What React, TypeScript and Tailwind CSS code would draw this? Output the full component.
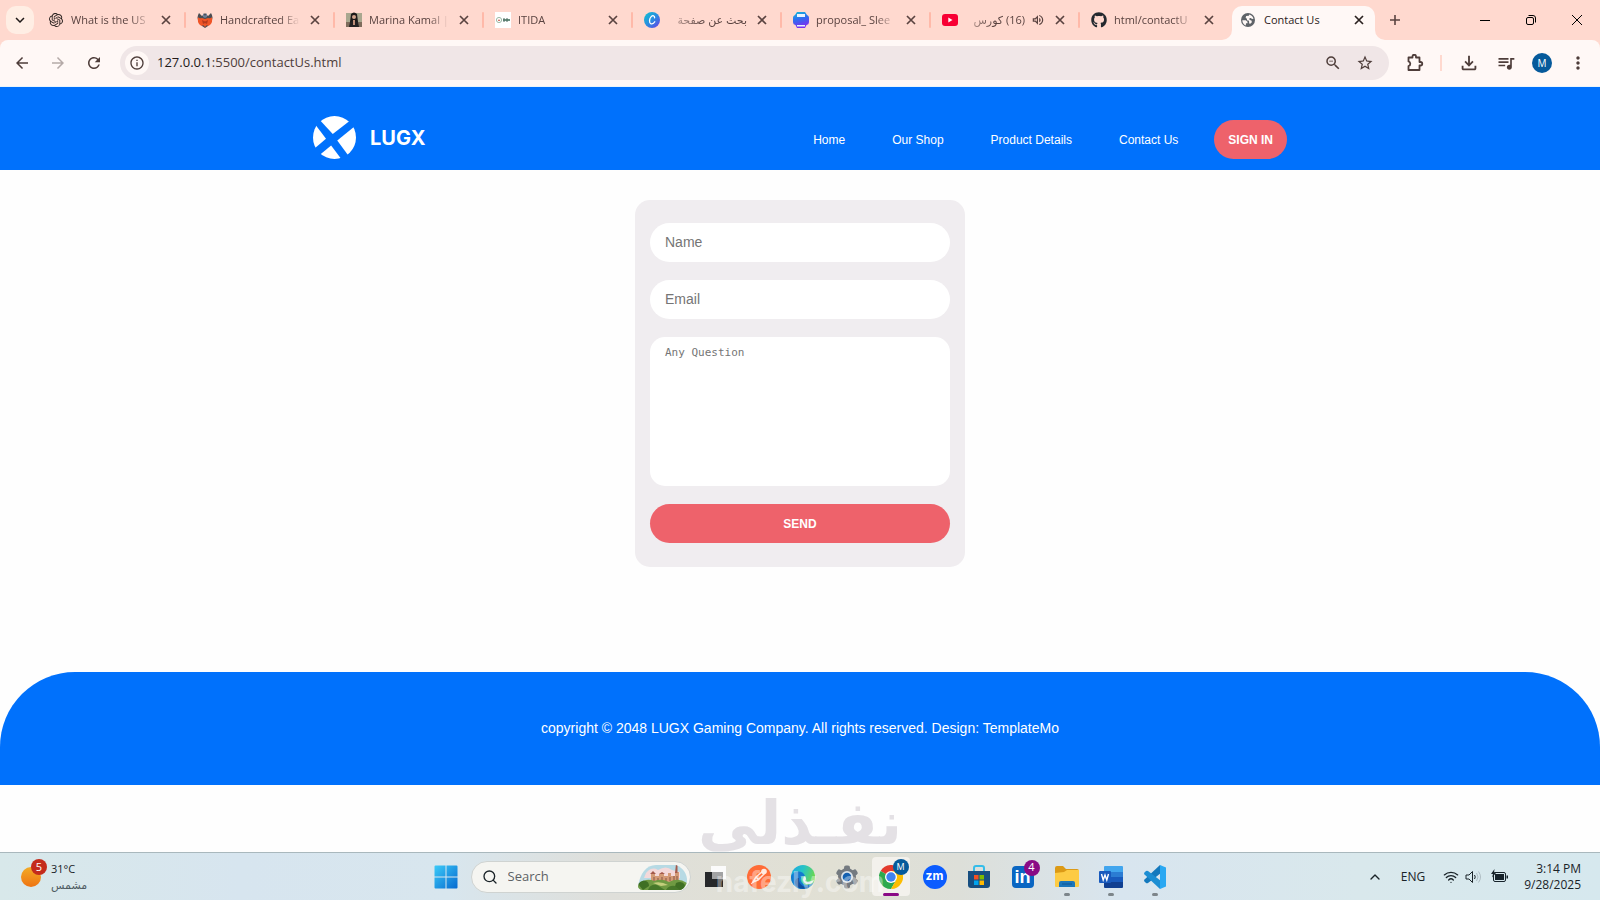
import type { ReactNode } from "react";
import {
  MdArrowBack,
  MdArrowForward,
  MdRefresh,
  MdInfoOutline,
  MdZoomOut,
  MdStarOutline,
  MdOutlineFileDownload,
  MdOutlineQueueMusic,
  MdMoreVert,
  MdKeyboardArrowDown,
  MdOutlineVolumeUp,
} from "react-icons/md";
import { FaGithub } from "react-icons/fa";
import { SiOpenai } from "react-icons/si";
import { ChevronUp, Search, Wifi } from "lucide-react";

type TabInfo = {
  title: string;
  icon: ReactNode;
  rtl?: boolean;
  audio?: boolean;
};

const CrossIcon = () => (
  <svg viewBox="0 0 14 14" className="size-3.5">
    <path d="M3 3l8 8M11 3l-8 8" stroke="currentColor" strokeWidth="1.700" />
  </svg>
);

const PlusIcon = () => (
  <svg viewBox="0 0 14 14" className="size-3.5">
    <path d="M7 2v10M2 7h10" stroke="currentColor" strokeWidth="1.600" />
  </svg>
);

const GlobeIcon = () => (
  <svg viewBox="0 0 14 14" className="size-3.5">
    <circle cx="7" cy="7" r="7" fill="#5f6368" />
    <path d="M1.300 7.200h3.500l1.700 1.600v1.400H5l-.2 2.200C2.800 11.700 1.300 9.600 1.300 7.200z" fill="#fff8f6" />
    <path d="M6 5.900L4.600 4.600 5.200 3l2.600-.2.600-1.200c2 .6 3.600 2.200 4.100 4.200l-1.600.2-.9-1.100-1.600.3v1.500l2.300 1.100v1.800l-1.500 1.200-1-.4L8 7.700 6 7.300z" fill="#fff8f6" />
  </svg>
);

const PuzzleIcon = () => (
  <svg viewBox="0 0 18 18" className="size-[18px]">
    <path
      d="M2.500 3.500h4v-1a1.500 1.500 0 0 1 3.500 0v1h3.500V8h1a1.700 1.700 0 0 1 0 3.500h-1v4.500h-11v-3.800a2.500 2.500 0 0 0 0-4.800z"
      fill="none"
      stroke="currentColor"
      strokeWidth="1.800"
      strokeLinejoin="round"
    />
  </svg>
);

const PhoenixIcon = () => (
  <svg viewBox="0 0 16 16" className="size-4">
    <path d="M2 1q-3 5 0 8l3 5 3 2 3-2 3-5q3-3 0-8l-3 3-3-3-3 3z" fill="#4a4c52" />
    <path d="M1 5q1 2 4 1l3 1 3-1q3 1 4-1 1 5-2 8l-2 1-1-1-2 2-2-2-1 1-2-1Q0 10 1 5z" fill="#ef5527" />
    <path d="M5 8l3 1.500L11 8l-1 4-2-1-2 1z" fill="#b83a1c" />
    <path d="M6 1l2 3 2-3v4L8 6 6 5z" fill="#6d7f9a" />
  </svg>
);

const PortraitIcon = () => (
  <svg viewBox="0 0 16 16" className="size-4">
    <path d="M0 1h16v14H0z" fill="#a9a78f" />
    <path d="M0 10h16v5H0z" fill="#7f6c5c" />
    <path d="M5 2q3-3 6 0l1 8-3 3H7l-3-3z" fill="#1d1a1a" />
    <path d="M3 15l1-5 3-1h2l3 1 1 5z" fill="#262223" />
    <circle cx="8" cy="5" r="2" fill="#d3a58d" />
    <path d="M7 8h2v5H7z" fill="#c08f7a" />
  </svg>
);

const ItidaIcon = () => (
  <svg viewBox="0 0 16 16" className="size-4">
    <path d="M0 0h16v16H0z" fill="#fff" />
    <circle cx="4" cy="8" r="2.600" fill="none" stroke="#9dbba8" />
    <path d="M3 9l1-2 1 2z" fill="#c04b3c" />
    <path d="M8 7h7v2H8z" fill="#6a9080" />
    <path d="M9 6v4M12 6v4" stroke="#4c6b60" strokeWidth="1" />
  </svg>
);

const CanvaIcon = () => (
  <svg viewBox="0 0 16 16" className="size-4">
    <defs>
      <linearGradient id="canva" x1="0" y1="0" x2="1" y2="1">
        <stop offset="0" stopColor="#10c4d0" />
        <stop offset="0.500" stopColor="#2a8de0" />
        <stop offset="1" stopColor="#6a3be6" />
      </linearGradient>
    </defs>
    <circle cx="8" cy="8" r="8" fill="url(#canva)" />
    <path
      d="M10.600 5.800C10.800 3.600 8.800 3 7.200 4.600 5.200 6.600 4.800 11 7 11.800 8.600 12.300 10 11.200 10.800 9.800"
      fill="none"
      stroke="#fff"
      strokeWidth="1.300"
      strokeLinecap="round"
    />
  </svg>
);

const PrinterIcon = () => (
  <svg viewBox="0 0 16 16" className="size-4">
    <defs>
      <linearGradient id="printer" x1="0" y1="0" x2="0.300" y2="1">
        <stop offset="0" stopColor="#12bfd8" />
        <stop offset="0.500" stopColor="#2f6df0" />
        <stop offset="1" stopColor="#7a2ff0" />
      </linearGradient>
    </defs>
    <path d="M4 0h8l2 3a3 3 0 0 1 2 3v4a3 3 0 0 1-2.500 3L12 16H4l-1.500-3A3 3 0 0 1 0 10V6a3 3 0 0 1 2-3z" fill="url(#printer)" />
    <path d="M4 2h8v3H4zM4 13h8v1.500H4z" fill="#e8f4ff" />
  </svg>
);

const YoutubeIcon = () => (
  <svg viewBox="0 0 16 16" className="size-4">
    <rect y="2" width="16" height="12" rx="3" fill="#f80034" />
    <path d="M6.300 5.600v4.800L10.500 8z" fill="#fff" />
  </svg>
);

const tabs: TabInfo[] = [
  { title: "What is the US", icon: <SiOpenai className="size-[14px] text-[#2b2220]" /> },
  { title: "Handcrafted Ea", icon: <PhoenixIcon /> },
  { title: "Marina Kamal |", icon: <PortraitIcon /> },
  { title: "ITIDA", icon: <ItidaIcon /> },
  { title: "بحث عن صفحة", icon: <CanvaIcon />, rtl: true },
  { title: "proposal_ Slee", icon: <PrinterIcon /> },
  { title: "(16) كورس", icon: <YoutubeIcon />, rtl: true, audio: true },
  { title: "html/contactU", icon: <FaGithub className="size-4 text-[#24292f]" /> },
];

function BrowserTab({ tab, divider }: { tab: TabInfo; divider: boolean }) {
  return (
    <li className="flex h-7 w-[149px] min-w-0 shrink items-center pl-[11px] text-[#5a4340]">
      <span className="flex size-4 shrink-0 items-center justify-center">{tab.icon}</span>
      {tab.rtl ? (
        <span
          dir="rtl"
          className="ml-[7px] min-w-0 flex-1 overflow-hidden text-[11px] whitespace-nowrap [mask-image:linear-gradient(to_left,black_50%,transparent_120%)]"
        >
          {tab.title}
        </span>
      ) : (
        <span className="ml-[7px] min-w-0 flex-1 overflow-hidden text-[11px] whitespace-nowrap [mask-image:linear-gradient(to_right,black_75%,transparent)]">
          {tab.title}
        </span>
      )}
      {tab.audio && <MdOutlineVolumeUp className="ml-1.5 size-[14px] shrink-0" />}
      <button
        type="button"
        aria-label="Close tab"
        className="ml-[7px] flex size-4 shrink-0 items-center justify-center"
      >
        <CrossIcon />
      </button>
      <span className={divider ? "ml-2.5 h-4 w-0.5 shrink-0 rounded bg-[#ffb9a9]" : "ml-2.5 w-0.5 shrink-0"} />
    </li>
  );
}

function TabStrip() {
  return (
    <div className="flex h-10 items-center bg-[#ffd9cf] pl-1.5">
      <button
        type="button"
        aria-label="Search tabs"
        className="flex size-7 shrink-0 items-center justify-center rounded-[10px] bg-[#ffeee4] text-[#1f1a18]"
      >
        <MdKeyboardArrowDown className="size-[18px]" />
      </button>
      <ul className="ml-[3px] flex min-w-0 items-center self-stretch">
        {tabs.map((tab, i) => (
          <BrowserTab key={tab.title} tab={tab} divider={i < tabs.length - 1} />
        ))}
        <li className="relative ml-[3px] flex h-[34px] w-[143px] shrink-0 items-center self-end rounded-t-[10px] bg-[#fff8f6] pr-2 pb-1.5 pl-[9px] text-[#2b2220]">
          <svg viewBox="0 0 10 10" className="absolute bottom-0 -left-2.5 size-2.5">
            <path d="M10 0v10H0A10 10 0 0 0 10 0z" fill="#fff8f6" />
          </svg>
          <svg viewBox="0 0 10 10" className="absolute -right-2.5 bottom-0 size-2.5">
            <path d="M0 0v10h10A10 10 0 0 1 0 0z" fill="#fff8f6" />
          </svg>
          <GlobeIcon />
          <span className="ml-[9px] flex-1 text-[11px] whitespace-nowrap">Contact Us</span>
          <button type="button" aria-label="Close tab" className="flex size-4 items-center justify-center">
            <CrossIcon />
          </button>
        </li>
      </ul>
      <button
        type="button"
        aria-label="New tab"
        className="ml-3 flex size-4 shrink-0 items-center justify-center text-[#5a4340]"
      >
        <PlusIcon />
      </button>
      <div className="ml-auto flex shrink-0 text-black">
        <button type="button" aria-label="Minimize" className="flex h-10 w-[46px] items-center justify-center">
          <svg viewBox="0 0 10 10" className="size-2.5">
            <path d="M0 5.500h10" stroke="currentColor" />
          </svg>
        </button>
        <button type="button" aria-label="Restore" className="flex h-10 w-[46px] items-center justify-center">
          <svg viewBox="0 0 10 10" className="size-2.5" fill="none" stroke="currentColor">
            <rect x="0.500" y="2.500" width="7" height="7" rx="1.500" />
            <path d="M2.500 0.500H7A2.500 2.500 0 0 1 9.500 3v4.500" />
          </svg>
        </button>
        <button type="button" aria-label="Close window" className="flex h-10 w-[46px] items-center justify-center">
          <svg viewBox="0 0 10 10" className="size-2.5" stroke="currentColor">
            <path d="M0 0l10 10M10 0L0 10" />
          </svg>
        </button>
      </div>
    </div>
  );
}

function Toolbar() {
  return (
    <div className="bg-[#ffd9cf]">
      <div className="flex h-[47px] items-center rounded-t-lg border-b border-[#e8f4fb] bg-[#fff8f6] px-3 text-[#4e3d3a]">
        <div className="flex shrink-0 items-center gap-[18px] pl-px">
          <button type="button" aria-label="Back">
            <MdArrowBack className="size-[18px]" />
          </button>
          <button type="button" aria-label="Forward" className="text-[#b5aaa8]">
            <MdArrowForward className="size-[18px]" />
          </button>
          <button type="button" aria-label="Reload">
            <MdRefresh className="size-[18px]" />
          </button>
        </div>
        <div className="ml-[17px] flex h-[34px] min-w-0 flex-1 items-center rounded-full bg-[#f0e6e7] pr-[15px] pl-[5px]">
          <button
            type="button"
            aria-label="Site information"
            className="flex size-6 shrink-0 items-center justify-center rounded-full bg-[#fff8f6]"
          >
            <MdInfoOutline className="size-4" />
          </button>
          <div className="ml-2 flex-1 text-[13px] whitespace-nowrap">
            <span className="text-[#231b1a]">127.0.0.1</span>:5500/contactUs.html
          </div>
          <button type="button" aria-label="Zoom" className="mr-3.5">
            <MdZoomOut className="size-[18px]" />
          </button>
          <button type="button" aria-label="Bookmark">
            <MdStarOutline className="size-[18px]" />
          </button>
        </div>
        <div className="ml-[17px] flex shrink-0 items-center gap-4">
          <button type="button" aria-label="Extensions">
            <PuzzleIcon />
          </button>
          <span className="h-4 w-0.5 bg-[#ffd9cf]" />
          <button type="button" aria-label="Downloads">
            <MdOutlineFileDownload className="size-[22px]" />
          </button>
          <button type="button" aria-label="Media">
            <MdOutlineQueueMusic className="size-5" />
          </button>
          <button
            type="button"
            aria-label="Profile"
            className="flex size-5 items-center justify-center rounded-full bg-[#065a9b] text-[10px] text-white"
          >
            M
          </button>
          <button type="button" aria-label="Menu">
            <MdMoreVert className="size-5" />
          </button>
        </div>
      </div>
    </div>
  );
}

const navLinks = ["Home", "Our Shop", "Product Details", "Contact Us"];

function SiteHeader() {
  return (
    <header className="bg-[#0071fc] pt-[29px] pb-[11px] text-white">
      <div className="mx-auto flex max-w-[974px] items-center justify-between">
        <a href="#home" className="flex items-center gap-3.5">
          <svg viewBox="0 0 42 42" className="size-[43px]">
            <clipPath id="disc">
              <circle cx="21" cy="21" r="21" />
            </clipPath>
            <g clipPath="url(#disc)" fill="#fff">
              <path d="M19.300 17.700L3 0h39z" />
              <path d="M12.700 22.300L0 5.300V33z" />
              <path d="M23.700 24L42 9.100V42h-5z" />
              <path d="M17.700 28.700L1.700 42h25.900z" />
            </g>
          </svg>
          <span className="font-['Inter',sans-serif] text-xl font-bold">LUGX</span>
        </a>
        <nav className="flex items-center pt-1 text-xs">
          <ul className="mr-9 flex gap-[47px]">
            {navLinks.map((label) => (
              <li key={label}>
                <a href="#nav">{label}</a>
              </li>
            ))}
          </ul>
          <button type="button" className="h-[39px] rounded-full bg-[#ee626b] px-3.5 font-bold">
            SIGN IN
          </button>
        </nav>
      </div>
    </header>
  );
}

function ContactForm() {
  return (
    <form className="flex w-[330px] flex-col gap-[18px] rounded-[15px] bg-[#f0edf0] px-[15px] pt-[23px] pb-6">
      <input
        type="text"
        aria-label="Name"
        placeholder="Name"
        className="h-[39px] rounded-full bg-white px-[15px] pb-0.5 text-sm placeholder:text-[#757575]"
      />
      <input
        type="email"
        aria-label="Email"
        placeholder="Email"
        className="h-[39px] rounded-full bg-white px-[15px] pb-0.5 text-sm placeholder:text-[#757575]"
      />
      <textarea
        aria-label="Any Question"
        placeholder="Any Question"
        className="h-[149px] resize-none rounded-[15px] bg-white px-[15px] py-2 font-['DejaVu_Sans_Mono',monospace] text-[11px] leading-[15px] placeholder:text-[#757575]"
      />
      <button type="button" className="h-[39px] rounded-full bg-[#ee626b] text-xs font-bold text-white">
        SEND
      </button>
    </form>
  );
}

function SitePage() {
  return (
    <div className="flex flex-1 flex-col bg-[#fefefe] font-['Liberation_Sans',Arial,sans-serif]">
      <SiteHeader />
      <main className="flex justify-center pt-[30px] pb-[105px]">
        <ContactForm />
      </main>
      <footer className="rounded-t-[75px] bg-[#0071fc] px-4 py-[46px] text-center text-sm leading-[21px] text-white">
        copyright © 2048 LUGX Gaming Company. All rights reserved. Design: TemplateMo
      </footer>
    </div>
  );
}

function AppIcon({
  label,
  children,
  state,
}: {
  label: string;
  children: ReactNode;
  state?: "open" | "active";
}) {
  return (
    <button type="button" aria-label={label} className="relative flex h-full w-11 items-center justify-center">
      {state === "active" && <span className="absolute inset-x-[3px] inset-y-1 rounded bg-[#f3f1ec]" />}
      <span className="relative">{children}</span>
      {state === "active" && <span className="absolute bottom-1 h-[3px] w-4 rounded-full bg-[#8a0a85]" />}
      {state === "open" && <span className="absolute bottom-1 h-[3px] w-1.5 rounded-full bg-[#7d858a]" />}
    </button>
  );
}

const WindowsIcon = () => (
  <svg viewBox="0 0 24 24" className="size-6">
    <defs>
      <linearGradient id="win" x1="0" y1="0" x2="1" y2="1">
        <stop offset="0" stopColor="#3ccbf8" />
        <stop offset="1" stopColor="#0669d0" />
      </linearGradient>
    </defs>
    <path
      d="M1.500.5h10v11H.5v-10a1 1 0 0 1 1-1zM12.500.5h10a1 1 0 0 1 1 1v10h-11zM.5 12.500h11v11h-10a1 1 0 0 1-1-1zM12.500 12.500h11v10a1 1 0 0 1-1 1h-10z"
      fill="url(#win)"
    />
  </svg>
);

const CastlePicture = () => (
  <svg viewBox="0 0 49 26" className="h-[26px] w-[49px]">
    <clipPath id="castleClip">
      <path d="M0 22C2 10 8 1 18 1h20c8 3 11 10 11 15s-3 9-7 10H4q-4-1-4-4z" />
    </clipPath>
    <g clipPath="url(#castleClip)">
      <path d="M0 0h49v26H0z" fill="#b7dae4" />
      <path d="M8 9q6-7 12-3 8-5 14 0l8 2v6H6z" fill="#f4d9da" />
      <path d="M13 10h4v2h4v-2h5v2h4V9h3v3h4V8h4v11H13z" fill="#d39a76" />
      <path d="M12 10l3-3 3 3zM21 10l3-2 3 2zM38 0h1.500v9H37z" fill="#a4594a" />
      <path d="M16 13v4M20 14v3M24 13v4M28 14v3M32 13v4M36 12v5M39 12v5" stroke="#8b5544" />
      <path d="M0 21q8-8 16-4 8-3 15 1 9-5 18 1v8H0z" fill="#6f9a42" />
      <path d="M0 20q4-5 8-3 3 1 3 5l-6 4zM38 19q6-3 9 2l-2 5h-9z" fill="#3f6f24" />
      <path d="M10 26q2-6 9-5l8 5zM28 26q3-5 9-4l5 4z" fill="#47782a" />
      <path d="M15 19q8-2 15 2l-7 1z" fill="#c3ce7c" />
    </g>
  </svg>
);

const TaskViewIcon = () => (
  <svg viewBox="0 0 24 24" className="size-6">
    <path d="M8 1h15v13H8z" fill="#fbfbfb" />
    <path d="M2 7h18v15H2z" fill="#26282a" />
    <path d="M9 7h11v7H9z" fill="#a2a3a4" />
  </svg>
);

const PostmanIcon = () => (
  <svg viewBox="0 0 24 24" className="size-6">
    <circle cx="12" cy="12" r="12" fill="#ff6c37" />
    <path d="M6 17l3-5 6-5 2 2-6 6zM9 12l2.500 2.500" fill="none" stroke="#ffe9e0" strokeWidth="1.500" />
    <circle cx="17" cy="6.500" r="2.800" fill="#ffe9e0" />
    <path d="M4 19l4-3" stroke="#ffe9e0" />
  </svg>
);

const EdgeIcon = () => (
  <svg viewBox="0 0 24 24" className="size-6">
    <defs>
      <linearGradient id="edge" x1="0" y1="0" x2="1" y2="0.400">
        <stop offset="0" stopColor="#1fa7e4" />
        <stop offset="0.500" stopColor="#27c3c6" />
        <stop offset="1" stopColor="#6bd84d" />
      </linearGradient>
    </defs>
    <circle cx="12" cy="12" r="12" fill="url(#edge)" />
    <path d="M0 12C2 5 12 5 14 11c-5-1-7 7 1 9 4 0 6-1 8-3A12 12 0 0 1 0 12z" fill="#1479cf" />
    <path d="M8 13c-1 6 5 11 11 8-4 4-13 4-15-3 0-4 2-5 4-5z" fill="#0f4f9e" />
    <path d="M14 11q2 3 0 5 3 2 9-1-1 3-4 4-6 1-7-4 0-3 2-4z" fill="#e1eef0" />
  </svg>
);

const SettingsIcon = () => (
  <svg viewBox="0 0 24 24" className="size-6">
    <g fill="#747a80">
      <circle cx="12" cy="12" r="9" />
      <rect x="9" y="0.500" width="6" height="23" rx="2" />
      <rect x="9" y="0.500" width="6" height="23" rx="2" transform="rotate(60 12 12)" />
      <rect x="9" y="0.500" width="6" height="23" rx="2" transform="rotate(120 12 12)" />
    </g>
    <circle cx="12" cy="12" r="6" fill="#dce4ea" />
    <circle cx="12" cy="12" r="4.300" fill="#1560b0" />
  </svg>
);

const ChromeIcon = () => (
  <svg viewBox="0 0 24 24" className="size-6">
    <path d="M12 12L1.600 6A12 12 0 0 1 22.400 6z" fill="#e33b2e" />
    <path d="M12 12L1.600 6A12 12 0 0 0 12 24l5.200-9z" fill="#2da94f" />
    <path d="M12 6h10.400A12 12 0 0 1 12 24l5.200-9z" fill="#fdbd00" />
    <circle cx="12" cy="12" r="6" fill="#fff" />
    <circle cx="12" cy="12" r="4.700" fill="#3f82f0" />
  </svg>
);

const StoreIcon = () => (
  <svg viewBox="0 0 24 24" className="size-6">
    <path d="M7 7V3a2 2 0 0 1 2-2h6a2 2 0 0 1 2 2v4" fill="none" stroke="#35bdea" strokeWidth="2" />
    <path d="M1 6h22v14a3 3 0 0 1-3 3H4a3 3 0 0 1-3-3z" fill="#174e80" />
    <path d="M7 10h4.500v4.500H7z" fill="#f25022" />
    <path d="M12.500 10H17v4.500h-4.500z" fill="#7fba00" />
    <path d="M7 15.500h4.500V20H7z" fill="#00a4ef" />
    <path d="M12.500 15.500H17V20h-4.500z" fill="#ffb900" />
  </svg>
);

const FolderIcon = () => (
  <svg viewBox="0 0 24 24" className="size-6">
    <path d="M0 3a2 2 0 0 1 2-2h6l3 3h11a2 2 0 0 1 2 2v4H0z" fill="#dc9a16" />
    <path d="M0 8l9-1 3-2h12v16a1 1 0 0 1-1 1H1a1 1 0 0 1-1-1z" fill="#fdcb44" />
    <path d="M4 22v-4a2 2 0 0 1 2-2h12a2 2 0 0 1 2 2v4z" fill="#1b76bb" />
    <path d="M7 19h10" stroke="#1460a0" strokeWidth="1.500" />
  </svg>
);

const WordIcon = () => (
  <svg viewBox="0 0 24 24" className="size-6">
    <path d="M6 1h17a1 1 0 0 1 1 1v5H5V2a1 1 0 0 1 1-1z" fill="#41a5ee" />
    <path d="M5 7h19v5H5z" fill="#2b7cd3" />
    <path d="M5 12h19v5H5z" fill="#185abd" />
    <path d="M5 17h19v5a1 1 0 0 1-1 1H6a1 1 0 0 1-1-1z" fill="#103f91" />
    <rect y="6" width="12" height="12" rx="1" fill="#185abd" />
    <path d="M2.500 9l1.700 6L6 10l1.800 5 1.700-6" fill="none" stroke="#fff" strokeWidth="1.400" />
  </svg>
);

const CodeIcon = () => (
  <svg viewBox="0 0 24 24" className="size-6">
    <path d="M17 0L1.500 14.500q-1 1 0 2L3 18q1 .6 2 0L18 8z" fill="#1479bd" />
    <path d="M17 24L1.500 9.500q-1-1 0-2L3 6q1-.6 2 0l13 10z" fill="#1c8ed3" />
    <path d="M17 0l6 2.500v19L17 24z" fill="#2aa8f2" />
  </svg>
);

const SpeakerIcon = () => (
  <svg viewBox="0 0 16 16" className="size-4" fill="none" stroke="currentColor" strokeLinejoin="round">
    <path d="M1 6h3l3.500-3.500v11L4 10H1z" />
    <path d="M9.500 6q1.500 2 0 4" />
    <path d="M11.500 4q3 4 0 8M13.500 2.500q4 5.500 0 11" stroke="#aebcc3" />
  </svg>
);

const BatteryIcon = () => (
  <svg viewBox="0 0 17 16" className="h-4 w-[17px]">
    <rect x="2.500" y="3.500" width="12" height="9" rx="1.500" fill="none" stroke="#16222a" />
    <path d="M4 5h9v6H4zM15.500 6.500H17v3h-1.500z" fill="#16222a" />
    <path d="M3.500 0L0 5h2L1 8.500 5 4H3z" fill="#16222a" />
  </svg>
);

function Taskbar() {
  return (
    <div className="relative grid h-12 grid-cols-[1fr_auto_1fr] items-center border-t border-[#a9b8bd] bg-[linear-gradient(90deg,#d8e8ea_0%,#d7e5ef_15%,#d8e6ee_28%,#dfdfda_38%,#e1e0d4_52%,#dddfd9_60%,#d8e5ef_70%,#d9e8ec_85%,#d6e8ee_100%)] text-[#1a2328]">
      <div className="flex items-center pl-[21px] text-[11px] leading-4">
        <div className="relative size-5 rounded-full bg-linear-to-b from-[#f2ab27] to-[#ee7312]">
          <span className="absolute -top-2 left-2.5 flex size-4 items-center justify-center rounded-full bg-[#c42b1c] text-[11px] text-white">
            5
          </span>
        </div>
        <div className="ml-2.5">
          <div>31°C</div>
          <div className="text-[#4f5c63]">مشمس</div>
        </div>
      </div>

      <div className="flex h-full items-center">
        <AppIcon label="Start">
          <WindowsIcon />
        </AppIcon>
        <label
          htmlFor="taskbar-search"
          className="mr-0.5 ml-[3px] flex h-8 w-[220px] items-center rounded-full border border-[#cfd3d1] bg-[#f5f5f1] pr-[3px] pl-2.5"
        >
          <Search className="size-4 shrink-0" />
          <input
            id="taskbar-search"
            type="text"
            aria-label="Search"
            placeholder="Search"
            className="ml-2.5 min-w-0 flex-1 bg-transparent text-[13px] placeholder:text-[#5d6265]"
          />
          <CastlePicture />
        </label>
        <AppIcon label="Task view">
          <TaskViewIcon />
        </AppIcon>
        <AppIcon label="Postman">
          <PostmanIcon />
        </AppIcon>
        <AppIcon label="Edge">
          <EdgeIcon />
        </AppIcon>
        <AppIcon label="Settings">
          <SettingsIcon />
        </AppIcon>
        <AppIcon label="Chrome" state="active">
          <ChromeIcon />
          <span className="absolute -top-1.5 left-3.5 flex size-4 items-center justify-center rounded-full bg-[#065a9b] text-[9px] text-white">
            M
          </span>
        </AppIcon>
        <AppIcon label="Zoom">
          <span className="flex size-6 items-center justify-center rounded-full bg-[#0b5cff] pb-0.5 font-['Inter',sans-serif] text-xs font-bold text-white">
            zm
          </span>
        </AppIcon>
        <AppIcon label="Store">
          <StoreIcon />
        </AppIcon>
        <AppIcon label="LinkedIn">
          <span className="flex size-[22px] items-center justify-center rounded-sm bg-[#0a66c2] font-['Liberation_Sans',sans-serif] text-lg font-bold text-white">
            in
          </span>
          <span className="absolute -top-1.5 left-3 flex size-4 items-center justify-center rounded-full bg-[#8a0a85] text-[11px] text-white">
            4
          </span>
        </AppIcon>
        <AppIcon label="File Explorer" state="open">
          <FolderIcon />
        </AppIcon>
        <AppIcon label="Word" state="open">
          <WordIcon />
        </AppIcon>
        <AppIcon label="Visual Studio Code" state="open">
          <CodeIcon />
        </AppIcon>
      </div>

      <div className="flex items-center justify-end pr-[19px] text-xs leading-4">
        <ChevronUp className="size-4" />
        <span className="ml-[18px]">ENG</span>
        <Wifi className="ml-[18px] size-4" />
        <span className="ml-1.5">
          <SpeakerIcon />
        </span>
        <span className="ml-2.5">
          <BatteryIcon />
        </span>
        <div className="ml-4 text-right">
          <div>3:14 PM</div>
          <div>9/28/2025</div>
        </div>
      </div>

      <div className="pointer-events-none absolute inset-x-0 bottom-0 flex flex-col items-center font-bold whitespace-nowrap">
        <span
          dir="rtl"
          className="mb-1.5 font-['DejaVu_Sans',sans-serif] text-[60px] leading-[70px] text-[#e4e1e5]"
        >
          نفـذلى
        </span>
        <span className="font-['Inter',sans-serif] text-[28px] leading-9 text-white/40">nafezly.com</span>
      </div>
    </div>
  );
}

export default function App() {
  return (
    <div className="flex min-h-screen flex-col font-['Open_Sans','DejaVu_Sans',sans-serif]">
      <TabStrip />
      <Toolbar />
      <SitePage />
      <Taskbar />
    </div>
  );
}
